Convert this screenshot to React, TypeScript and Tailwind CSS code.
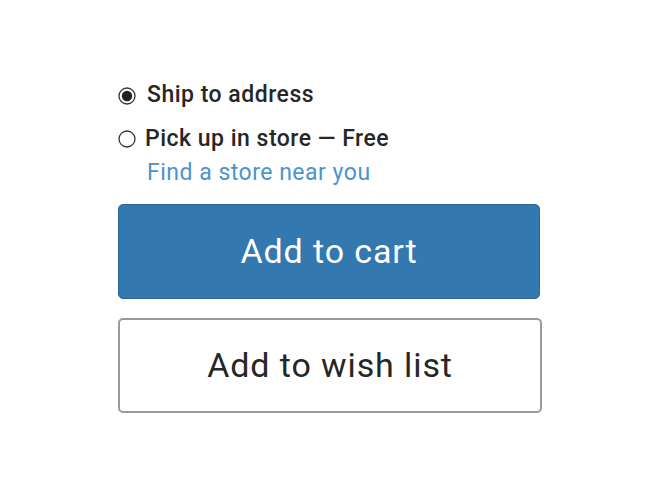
const Radio = ({ checked }: { checked?: boolean }) => (
  <svg width="18" height="18" viewBox="0 0 18 18" className="shrink-0">
    <circle cx="9" cy="9" r="8" fill="#fff" stroke="#333" strokeWidth="1.3" />
    {checked && <circle cx="9" cy="9" r="5.2" fill="#222" />}
  </svg>
)

export default function App() {
  return (
    <div className="min-h-[494px] bg-white font-['Roboto',sans-serif] text-[#262626]">
      <div className="flex flex-col pl-[118px] pt-[81px]">
        <label className="flex items-center gap-[10px] text-[23px] leading-[28px] font-medium tracking-[0.5px]">
          <span className="mt-[1px]">
            <Radio checked />
          </span>
          <span className="ml-[1px]">Ship to address</span>
        </label>
        <label className="mt-[16px] flex items-center gap-[9px] text-[23px] leading-[28px] font-medium tracking-[0.5px]">
          <Radio />
          <span>Pick up in store — Free</span>
        </label>
        <a className="mt-[6px] ml-[29px] text-[23px] leading-[28px] tracking-[0.5px] text-[#4b93cf]">
          Find a store near you
        </a>
        <button className="mt-[17px] h-[95px] w-[422px] rounded-[5px] border border-[#2b6697] bg-[#3378af] text-[34px] tracking-[0.9px] text-white">
          Add to cart
        </button>
        <button className="mt-[19px] h-[95px] w-[424px] rounded-[5px] border-2 border-[#9a9a9a] bg-white text-[34px] tracking-[0.9px] text-[#262626]">
          Add to wish list
        </button>
      </div>
    </div>
  )
}
